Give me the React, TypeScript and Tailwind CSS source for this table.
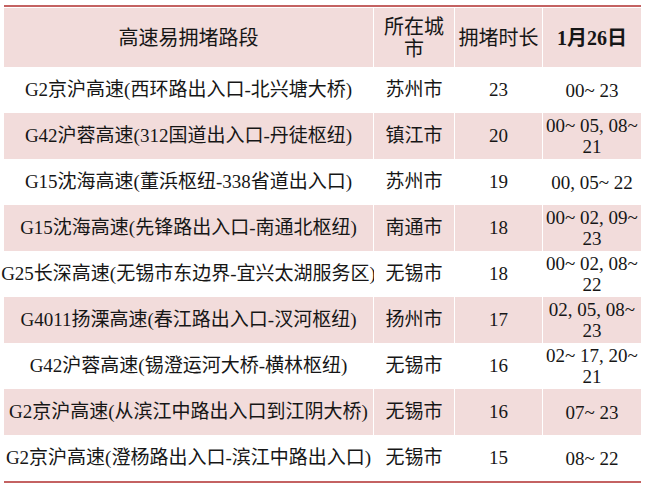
import React from 'react';

type Row = {
    road: string;
    city: string;
    hours: string;
    times: string[];
};

const rows: Row[] = [
    { road: 'G2京沪高速(西环路出入口-北兴塘大桥)', city: '苏州市', hours: '23', times: ['00~ 23'] },
    { road: 'G42沪蓉高速(312国道出入口-丹徒枢纽)', city: '镇江市', hours: '20', times: ['00~ 05, 08~', '21'] },
    { road: 'G15沈海高速(董浜枢纽-338省道出入口)', city: '苏州市', hours: '19', times: ['00, 05~ 22'] },
    { road: 'G15沈海高速(先锋路出入口-南通北枢纽)', city: '南通市', hours: '18', times: ['00~ 02, 09~', '23'] },
    { road: 'G25长深高速(无锡市东边界-宜兴太湖服务区)', city: '无锡市', hours: '18', times: ['00~ 02, 08~', '22'] },
    { road: 'G4011扬溧高速(春江路出入口-汊河枢纽)', city: '扬州市', hours: '17', times: ['02, 05, 08~', '23'] },
    { road: 'G42沪蓉高速(锡澄运河大桥-横林枢纽)', city: '无锡市', hours: '16', times: ['02~ 17, 20~', '21'] },
    { road: 'G2京沪高速(从滨江中路出入口到江阴大桥)', city: '无锡市', hours: '16', times: ['07~ 23'] },
    { road: 'G2京沪高速(澄杨路出入口-滨江中路出入口)', city: '无锡市', hours: '15', times: ['08~ 22'] },
];

const cell = 'flex items-center justify-center text-center';

export default function App() {
    return (
        <div className="w-[650px] h-[486px] bg-white pt-[5px] pl-[4px] text-[19px] text-[#161616] font-['Liberation_Serif','Noto_Sans_CJK_SC',serif]">
            <div className="w-[637px] border-t-2 border-b-2 border-[#c46262] pt-px">
                <div className="grid grid-cols-[369px_80px_87px_98px] gap-x-px">
                    {/* header */}
                    <div className={`${cell} h-[59px] bg-[#f2dcdb] text-[20px]`}>高速易拥堵路段</div>
                    <div className={`${cell} h-[59px] bg-[#f2dcdb] text-[20px] leading-[22px]`}>
                        所在城<br />市
                    </div>
                    <div className={`${cell} h-[59px] bg-[#f2dcdb] text-[20px]`}>拥堵时长</div>
                    <div className={`${cell} h-[59px] bg-[#f2dcdb] text-[20px] font-bold`}>1月26日</div>

                    {rows.map((r, i) => {
                        const bg = i % 2 === 1 ? 'bg-[#f2dcdb]' : 'bg-white';
                        return (
                            <React.Fragment key={i}>
                                <div className={`${cell} h-[46px] whitespace-nowrap ${bg}`}>{r.road}</div>
                                <div className={`${cell} h-[46px] ${bg}`}>{r.city}</div>
                                <div className={`${cell} h-[46px] ${bg}`}>{r.hours}</div>
                                <div className={`${cell} h-[46px] flex-col leading-[21px] ${bg}`}>
                                    {r.times.map((t, j) => (
                                        <span key={j} className="whitespace-pre">{t}</span>
                                    ))}
                                </div>
                            </React.Fragment>
                        );
                    })}
                </div>
            </div>
        </div>
    );
}
